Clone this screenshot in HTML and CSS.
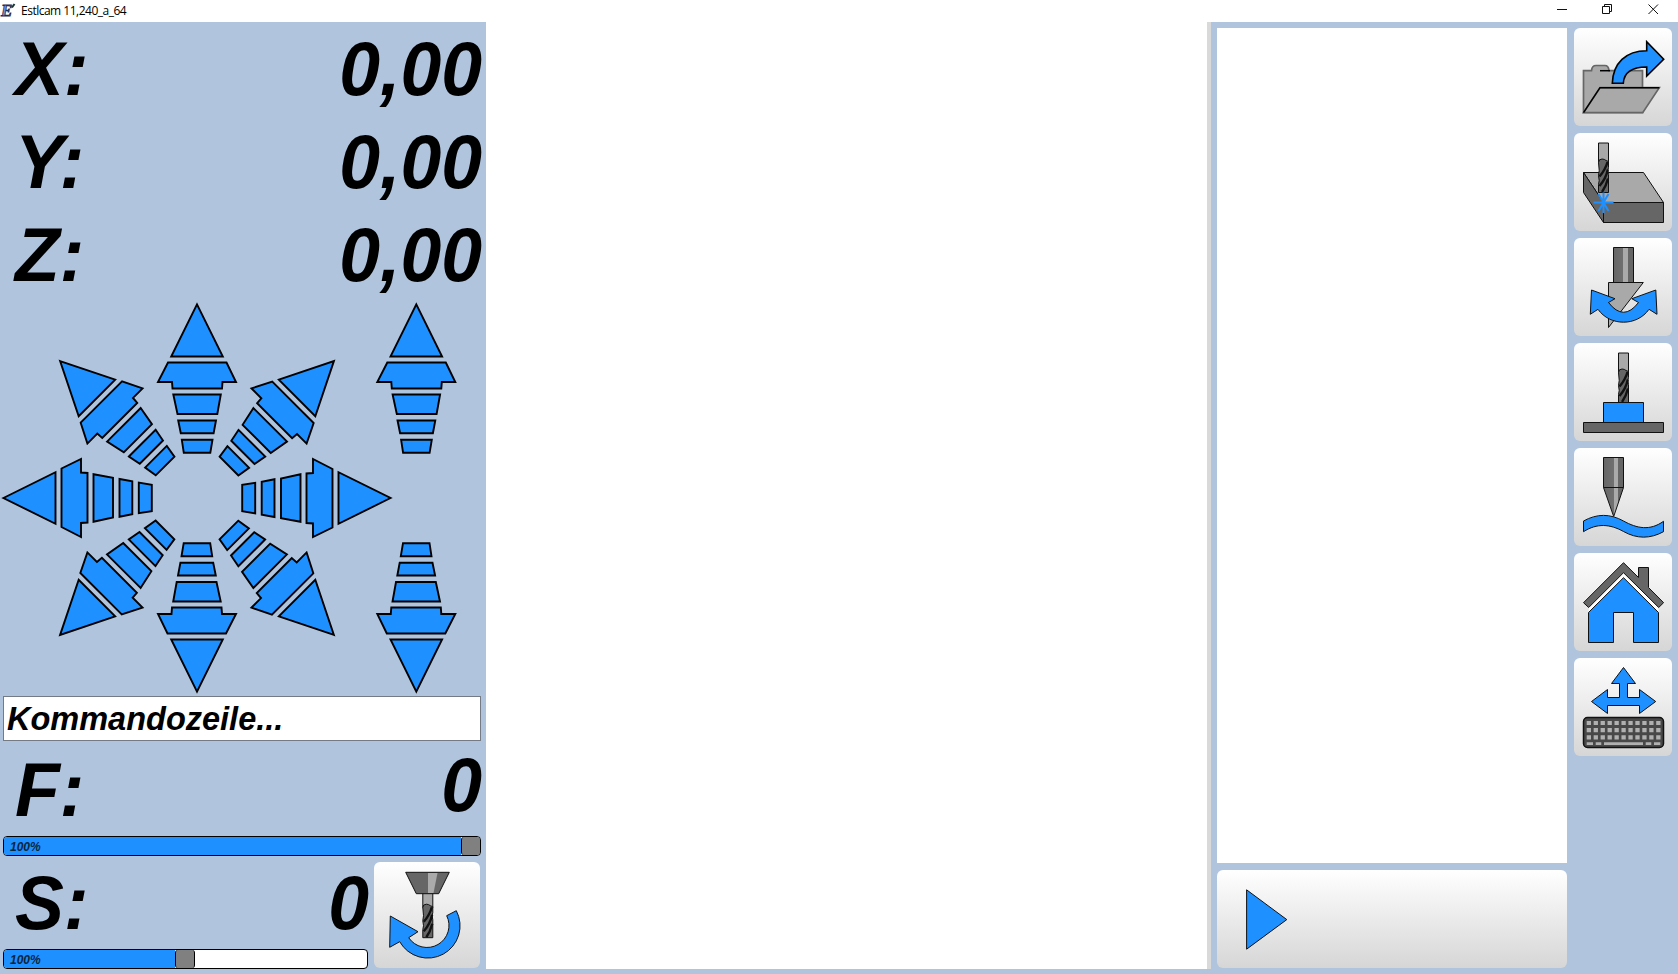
FILE: index.html
```html
<!DOCTYPE html>
<html lang="de">
<head>
<meta charset="utf-8">
<title>Estlcam 11,240_a_64</title>
<link rel="stylesheet" href="styles.css">
</head>
<body>
<svg class="defs" width="0" height="0">
  <defs>
    <g id="jog-arrow">
      <path d="M0-193.600 25.800-141.500H-25.800Z"/>
      <path d="M-29-135.5H29.5L39-116H25.5L25-109.5H-24.5L-25-116H-39Z"/>
      <path d="M-23.7-103.5H23.8L20.3-84H-19.5Z"/>
      <path d="M-18.8-77.5H19L16.6-64.7H-16.2Z"/>
      <path d="M-15.2-58.2H15.5L13.3-45.2H-13.2Z"/>
    </g>
    <g id="mill">
      <path class="light" d="M.5 .5H10.500V20H.5Z"/>
      <path class="flute" d="M.5 20Q.5 16.500 4 16.500Q6.500 16.500 8 18L10.500 19V25L9.800 28 10.500 32V50H.5V42L1.200 38 .5 33 1.200 28Z"/>
      <path class="groove" d="M9.500 19.500Q7.500 27 1.500 34M9.800 27Q8 36 1.500 43.500M10 36Q8 44 4 49.500"/>
    </g>
    <linearGradient id="steel">
      <stop offset="0" stop-color="#666"/><stop offset=".5" stop-color="#707070"/>
      <stop offset=".5" stop-color="#aaa"/><stop offset=".74" stop-color="#aaa"/>
      <stop offset=".74" stop-color="#666"/><stop offset="1" stop-color="#666"/>
    </linearGradient>
  </defs>
</svg>
<div class="window">
  <header class="titlebar">
    <svg class="logo" width="16" height="18" viewBox="0 0 16 18">
      <text class="logo-letter" x="1" y="14.500">E</text>
      <path class="logo-tick" d="M12 6.500 14.500 3"/>
    </svg>
    <span class="caption">Estlcam 11,240_a_64</span>
    <svg class="controls" width="102" height="22" viewBox="0 0 102 22">
      <path d="M0 9.500H10M45.500 6.500H52.500V13.500H45.500ZM47.500 6.500V4.500H54.500V11.500H52.500M91.500 4.500 101 14M101 4.500 91.500 14"/>
    </svg>
  </header>
  <main class="workspace">
    <section class="panel">
      <div class="readout"><span class="axis">X:</span><span class="value">0,00</span></div>
      <div class="readout"><span class="axis">Y:</span><span class="value">0,00</span></div>
      <div class="readout"><span class="axis">Z:</span><span class="value">0,00</span></div>
      <svg class="jog" width="486" height="395" viewBox="0 301 486 395">
        <g transform="translate(197 498)">
          <use href="#jog-arrow"/>
          <use href="#jog-arrow" transform="rotate(45)"/>
          <use href="#jog-arrow" transform="rotate(90)"/>
          <use href="#jog-arrow" transform="rotate(135)"/>
          <use href="#jog-arrow" transform="rotate(180)"/>
          <use href="#jog-arrow" transform="rotate(225)"/>
          <use href="#jog-arrow" transform="rotate(270)"/>
          <use href="#jog-arrow" transform="rotate(315)"/>
        </g>
        <g transform="translate(416.300 498)">
          <use href="#jog-arrow"/>
          <use href="#jog-arrow" transform="rotate(180)"/>
        </g>
      </svg>
      <div class="command">Kommandozeile...</div>
      <div class="readout feed"><span class="axis">F:</span><span class="value">0</span></div>
      <div class="slider"><div class="fill" style="width:457px">100%</div><div class="thumb"></div></div>
      <div class="spindle">
        <div class="spindle-info">
          <div class="readout speed"><span class="axis">S:</span><span class="value">0</span></div>
          <div class="slider"><div class="fill" style="width:171px">100%</div><div class="thumb"></div></div>
        </div>
        <div class="button spindle-button">
          <svg class="icon" width="106" height="106" viewBox="0 0 106 106">
            <use href="#mill" transform="translate(48.300 25.700)"/>
            <path class="dark" d="M42.300 31.700H64.700L75.300 10.300H31.700Z"/>
            <path class="shine" d="M54 11H63.500L59.500 31H54Z"/>
            <path class="blue" d="M82.300 48.700A32.270 32.270 0 0 1 25.700 79.700L15.700 85.300 16.300 54 44 69.700 34.700 75.700A22 22 0 0 0 72.700 53.700Z"/>
          </svg>
        </div>
      </div>
    </section>
    <section class="canvas"></section>
    <section class="program">
      <div class="listing"></div>
      <div class="button play">
        <svg class="icon" width="98" height="98" viewBox="0 0 98 98"><path class="blue" d="M29.600 19.800 69.800 49.600 29.600 79.200Z"/></svg>
      </div>
    </section>
    <nav class="tools">
      <div class="button"><svg class="icon" width="98" height="98" viewBox="0 0 98 98">
        <path class="folder" d="M9.500 84.500V42.700H17.500Q18 37.500 22 37.500H31Q34.500 37.500 35 42.700H68.500V84.500Z"/>
        <path class="edge" d="M26 42.700H36"/>
        <path class="folder" d="M9.500 84.700 26 59.700H85.300L68.700 84.700Z"/>
        <path class="edge" d="M9.500 84.700 26 59.700H85.300"/>
        <path class="blue thick" d="M38.300 55.300C39 35 52 22.700 72.700 22.700V13.700L89.700 31.300 72.700 48V39C60 39 50 43 49.300 55.300Z"/>
      </svg></div>
      <div class="button"><svg class="icon" width="98" height="98" viewBox="0 0 98 98">
        <path class="light" d="M9.500 39.500H69.500L89.500 69.500H29.500Z"/>
        <path class="dark" d="M9.500 39.500 29.500 69.500V89.500L9.500 59.500ZM29.500 69.500H89.500V89.500H29.500Z"/>
        <use href="#mill" transform="translate(24 9.500)"/>
        <path class="star" d="M19.500 69.500H39.500M29.500 59.500V80M24.500 61 34.500 78M34.500 61 24.500 78"/>
      </svg></div>
      <div class="button"><svg class="icon" width="98" height="98" viewBox="0 0 98 98">
        <path class="steel" d="M39.500 9.500H59.500V44.500H39.500Z"/>
        <path class="light" d="M34.500 44.500H69.300L34.500 89.500Z"/>
        <path class="blue" d="M17.500 52 41 60.700 34.500 64.500Q49.500 84 64.500 64.500L57.800 60.700 81.800 52 83 76.300 75 71.300C63 88.500 36 88.500 24 71.300L16.300 76.300Z"/>
      </svg></div>
      <div class="button"><svg class="icon" width="98" height="98" viewBox="0 0 98 98">
        <use href="#mill" transform="translate(44 9.500)"/>
        <path class="blue" d="M29.500 59.500H69.500V79.500H29.500Z"/>
        <path class="dark" d="M9.500 79.500H89.500V89.500H9.500Z"/>
      </svg></div>
      <div class="button"><svg class="icon" width="98" height="98" viewBox="0 0 98 98">
        <path class="blue" d="M9.500 73C23 65.500 36 65.500 49.500 73S76 83 89.500 73.300V83.700C76 91 63 91 49.500 83.500S23 75 9.500 83.700Z"/>
        <path class="steel" d="M29.500 9.500H49.500V39.500L39.700 68.500 29.500 39.500Z"/>
        <path class="dark" d="M29.500 39.500H49.500"/>
      </svg></div>
      <div class="button"><svg class="icon" width="98" height="98" viewBox="0 0 98 98">
        <path class="gap" d="M49.500 19.700 14.700 54.500V59.500H84.700V54.500Z"/>
        <path class="dark" d="M49.500 9.700 64.500 24.500V14.500H74.500V34.500L89.600 49.700 84.700 54.500 49.500 19.700 14.700 54.500 9.500 49.700Z"/>
        <path class="blue" d="M49.500 24.700 84.500 59.500V89.500H59.500V59.500H39.500V89.500H14.500V59.500Z"/>
      </svg></div>
      <div class="button"><svg class="icon" width="98" height="98" viewBox="0 0 98 98">
        <path class="blue" d="M49.500 9.500 61.500 25.500H53.500V39.500H65.500V31.500L81.700 43.500 65.500 55.500V47.500H33.500V55.500L17.500 43.500 33.500 31.500V39.500H45.500V25.500H37.500Z"/>
        <rect class="keyboard" x="9.500" y="59.500" width="80" height="30" rx="4"/>
        <path class="keys" d="M12.700 65H86.500M12.700 72.200H86.500M12.700 79.300H86.500"/>
        <path class="keys-bottom" d="M12.700 85.700H19M21.700 85.700H27.300M30 85.700H69M71.700 85.700H77.300M80 85.700H86.300"/>
      </svg></div>
    </nav>
  </main>
</div>
</body>
</html>
```
FILE: styles.css
```css
* { box-sizing: border-box; }
body { margin: 0; background: #fff; font-family: "Liberation Sans", Arial, sans-serif; }
.defs { display: block; }
.window { width: 1678px; height: 974px; display: flex; flex-direction: column; overflow: hidden; }
.titlebar { height: 22px; display: flex; align-items: flex-start; padding-right: 19px; background: #fff; }
.logo { margin-top: 1px; overflow: visible; }
.logo-letter { font: italic bold 17px "Liberation Serif", serif; fill: #7c90dc; stroke: #1e2c50; stroke-width: .8px; }
.logo-tick { stroke: #1c3328; stroke-width: 2; }
.caption { margin-left: 5px; font: 12px/21px "Open Sans", sans-serif; color: #000; letter-spacing: -0.5px; flex: 1; }
.controls path { fill: none; stroke: #111; stroke-width: 1; }
.workspace { flex: 1; display: flex; background: #b0c4de; }
.panel { width: 486px; padding-top: 2px; display: flex; flex-direction: column; font-weight: bold; font-style: italic; }
.readout { height: 93px; padding-right: 4px; display: flex; justify-content: space-between; font-size: 73.33px; line-height: 93px; }
.axis { padding-left: 15px; }
/* Digits and letters are slightly taller than the font draws them; the baseline stays put. */
.axis, .value { display: block; transform: scaleY(1.045); transform-origin: 0 71px; }
.jog { display: block; margin-top: -2px; fill: #1e90ff; stroke: #000; stroke-width: 1.9; }
.command { height: 45px; margin: 0 5px 0 3px; padding-left: 3px; border: 1px solid #747b85; background: #fff; font-size: 32.5px; line-height: 44px; }
.feed { height: 95px; }
.feed .axis { margin-top: 4px; }
.feed .value { margin-top: -1px; }
.slider { height: 20px; margin: 0 5px 0 3px; border: 1px solid #000; border-radius: 4px; background: #fff; display: flex; overflow: hidden; flex: none; }
.fill { flex: none; background: #1e90ff; padding-left: 6px; font-size: 12px; line-height: 20px; color: #0a2540; }
.thumb { flex: none; width: 20px; background: #808080; border: solid #000; border-width: 0 1px; border-radius: 3px; }
.spindle { display: flex; margin-top: 6px; }
.spindle-info { width: 373px; }
.speed { height: 87px; line-height: 85px; }
.speed .axis, .speed .value { transform-origin: 0 67px; }
.button { width: 98px; height: 98px; border-radius: 6px; background: linear-gradient(#fff, #d6d6d6); flex: none; }
.spindle-button { width: 106px; height: 106px; margin-left: 1px; }
.icon { display: block; }
.icon path { stroke: #111; stroke-width: 1; fill: none; }
.icon .blue { fill: #1e90ff; }
.icon .dark { fill: #666; }
.icon .light { fill: #a9a9a9; }
.icon .steel { fill: url(#steel); }
.icon .shine { fill: #aaa; stroke: none; }
.icon .folder { fill: #a9a9a9; stroke: #666; stroke-width: 1.7; }
.icon .edge { stroke: #000; stroke-width: 1.5; }
.icon .thick { stroke-width: 1.6; stroke: #000; }
.icon .star { stroke: #1e90ff; stroke-width: 2; }
.icon .gap { fill: #fff; stroke: none; }
#mill path { stroke: #111; stroke-width: 1; }
#mill .light { fill: #a9a9a9; }
#mill .flute { fill: #666; }
#mill .groove { stroke-width: 2.4; fill: none; }
.keyboard { fill: #484848; stroke: #111; stroke-width: 1.5; }
.icon .keys { stroke: #b0b0b0; stroke-width: 4.2; stroke-dasharray: 4.3 2.65; }
.icon .keys-bottom { stroke: #b0b0b0; stroke-width: 2.8; }
.canvas { width: 725px; height: 947px; background: #fff; border-right: 4px solid #d9d9d9; }
.program { width: 350px; margin: 6px 0 0 6px; display: flex; flex-direction: column; gap: 7px; }
.listing { height: 835px; background: #fff; }
.play { width: 350px; }
.tools { margin: 6px 0 0 7px; display: flex; flex-direction: column; gap: 7px; }
```
